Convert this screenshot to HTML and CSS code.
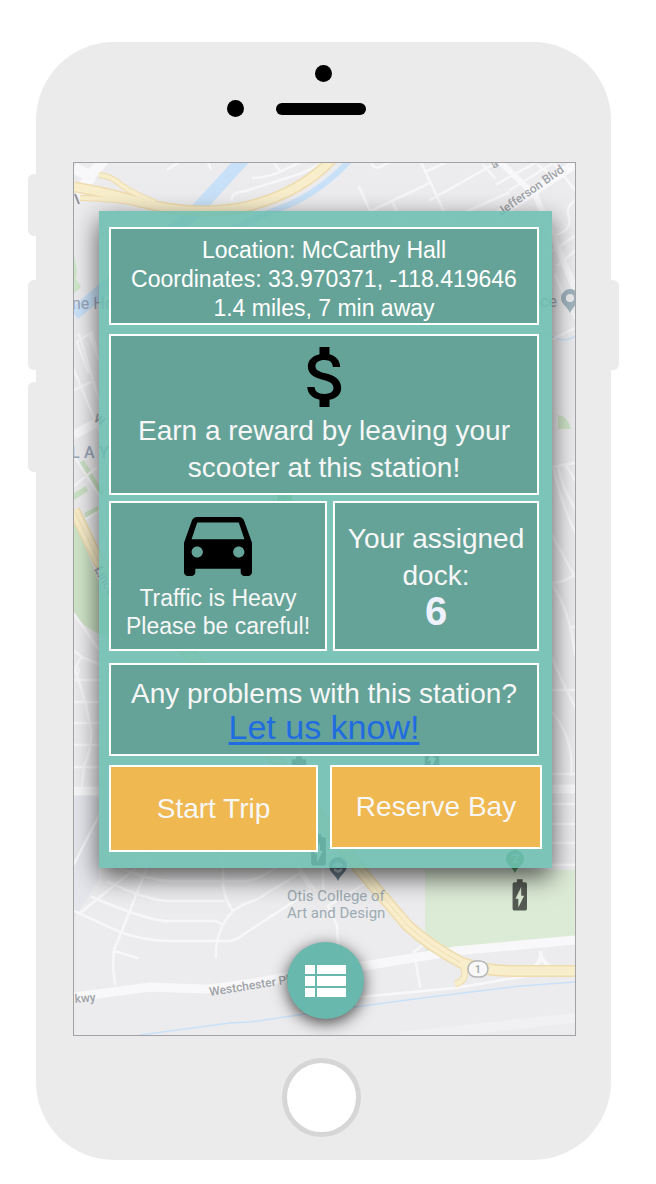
FILE: index.html
```html
<!DOCTYPE html>
<html lang="en">
<head>
<meta charset="utf-8">
<meta name="viewport" content="width=device-width, initial-scale=1">
<title>Scooter station</title>
<link rel="stylesheet" href="styles.css">
</head>
<body>
<div class="device">
  <div class="rail rail-left"><i class="key key-short"></i><i class="key"></i><i class="key key-last"></i></div>
  <div class="phone">
    <header class="phone-top">
      <span class="dot"></span>
      <div class="ear"><span class="dot"></span><span class="speaker"></span></div>
    </header>
    <main class="screen">
      <svg class="map" viewBox="74 163 501 872" preserveAspectRatio="xMidYMid slice" aria-hidden="true">
        <defs>
          <path id="battery" fill-rule="evenodd" d="M15.67 4H14V2h-4v2H8.33C7.6 4 7 4.6 7 5.33v15.33C7 21.4 7.6 22 8.33 22h7.33c.74 0 1.34-.6 1.34-1.33V5.33C17 4.6 16.4 4 15.67 4zM11 20v-5.5H9L13 7v5.5h2L11 20z"/>
        </defs>
        <rect x="74" y="163" width="501" height="872" fill="#ececee"/>
        <!-- parks -->
        <path d="M425 870H575V938L425 952Z" fill="#dcebd6"/>
        <path d="M74 516L98 580L130 640V644L99 634Q82 626 74 614Z" fill="#cfe5c8"/>
        <path d="M74 254L77 270L76 279L81 287L74 293Z" fill="#cfe7c9"/>
        <path d="M558 415Q568 416 571 429H558Z" fill="#cfe5c8"/>
        <path d="M79 463L84 460L104 493L99 497ZM74 493L86 486L88 491L74 500ZM84 513L98 506V513L86 519Z" fill="#cce3c6"/>
        <path d="M74 786L99 800V880L74 918Z" fill="#e4e6ec"/>
        <path d="M277 491h15v13h-15z" fill="#9bd08f"/>
        <text x="281" y="502" class="lbl" font-size="11">y</text>
        <!-- water -->
        <g fill="none" stroke="#c9e1f8">
          <path d="M247 155L196 211L74 314" stroke-width="13"/>
          <path d="M350 160Q315 198 270 212L230 230" stroke-width="6"/>
          <path d="M140 1035L230 1023L250 1022L340 1009L430 997L520 986L575 982" stroke-width="1.5"/>
          <path d="M545 333Q563 345 575 336" stroke-width="1.5"/>
        </g>
        <!-- local streets -->
        <g fill="none" stroke="#f7f7f9" stroke-width="2.5" stroke-linejoin="round" stroke-linecap="round">
          <path d="M168 169L184 159M206 158L211 169M270 158L280 171M253 178Q270 178 290 167L312 157M232 200Q230 193 245 191L300 174L335 157M370 158Q372 170 380 167L400 157M420 160L455 235M430 183L360 216M427 171L470 152M359 187L372 215M393 203L401 220M430 200L505 158M452 218L508 193M483 165L495 178"/>
          <path d="M497 184L540 160M510 190L553 163M538 165L551 175M545 152L575 190M556 235Q574 229 568 214Q567 205 576 200M556 240L576 285M551 252L576 235M558 265L576 250M555 275L575 318M553 339L575 328"/>
          <path d="M74 390L91 382M74 370L99 430M79 334L99 400M90 336L99 360M77 342L92 332M77 342L88 372M92 333L97 350M74 486L96 468M74 456L102 500L106 530M84 520L98 512M74 614L99 650"/>
          <path d="M552 467L575 463M553 467Q560 500 575 532M566 465L576 482M558 468Q563 490 576 510M552 535L575 577M552 583Q567 582 575 574M552 585Q570 610 575 655M571 627H576M552 658Q563 684 575 707M552 690H575M552 712Q575 740 571 775M552 774H575M552 804H575M552 824H575M552 843H575M552 865H575"/>
          <path d="M74 651L82 657L99 664M82 657Q72 668 77 676Q86 700 91 730Q92 750 84 765L82 787M77 676Q80 670 78 668M74 680H99M74 702H99M74 723H99M74 745H99M74 767H99M104 806L74 864"/>
          <path d="M152 855L80 913M150 860L123 928L114 950Q112 965 115 984M114 951L138 958M74 911L120 932Q145 941 170 941H228Q236 941 244 934L310 891M92 897Q140 918 165 921H212Q218 921 221 924M108 882Q145 899 165 901H224M120 868Q150 880 170 881H246Q260 880 290 858M223 855V885Q225 900 233 911Q246 902 256 900L300 873M233 911Q215 930 216 957M290 855L315 890M300 873L310 888M366 883L328 906L337 925L338 945M290 860L340 820M323 855V890M130 820L180 850H260M414 951L420 987M424 944L414 952"/>
        </g>
        <!-- avenues -->
        <g fill="none" stroke="#f8f8fa">
          <path d="M74 997L150 987Q170 988 207 989Q250 985 290 976L370 965L455 951L575 940" stroke-width="9"/>
          <path d="M74 791H99M552 789H575" stroke-width="9"/>
          <path d="M74 435L99 421" stroke-width="9"/>
          <path d="M498 160L536 196L576 292" stroke-width="6"/>
          <path d="M496 216L575 164" stroke-width="9"/>
          <path d="M74 168L90 176L104 160M76 194L92 176" stroke-width="11"/>
          <path d="M360 997L455 988L527 976" stroke-width="2.5"/>
          <path d="M541 951V957Q538 968 528 969M541 957Q547 968 556 968" stroke-width="4"/>
          <path d="M400 1037L575 1018" stroke-width="10" stroke="#f1f1f3"/>
        </g>
        <!-- highways -->
        <g fill="none" stroke="#efdcae">
          <path d="M74 187Q105 192 140 202Q190 216 240 208Q300 195 333 158" stroke-width="11"/>
          <path d="M80 198Q115 198 145 205" stroke-width="6"/>
          <path d="M99 175Q112 176 121 185Q135 195 155 202" stroke-width="6"/>
          <path d="M74 510L99 562L210 675L318 815L360 870L408 926Q430 946 462 963Q485 971 515 971H575" stroke-width="12"/>
          <path d="M462 963Q470 980 455 984" stroke-width="7"/>
        </g>
        <g fill="none" stroke="#f8eecb">
          <path d="M74 187Q105 192 140 202Q190 216 240 208Q300 195 333 158" stroke-width="8"/>
          <path d="M80 198Q115 198 145 205" stroke-width="4"/>
          <path d="M99 175Q112 176 121 185Q135 195 155 202" stroke-width="4"/>
          <path d="M74 510L99 562L210 675L318 815L360 870L408 926Q430 946 462 963Q485 971 515 971H575" stroke-width="9"/>
          <path d="M462 963Q470 980 455 984" stroke-width="5"/>
        </g>
        <path d="M74 510L99 562M360 870L408 926Q430 946 460 962" fill="none" stroke="#f0dfb2"/>
        <!-- route shield -->
        <rect x="468" y="961" width="20" height="16" rx="8" fill="#f8f8f8" stroke="#b4b5b6" stroke-width="1.5"/>
        <text x="478" y="973" class="lbl" font-size="11" text-anchor="middle">1</text>
        <!-- place names -->
        <text class="lbl" font-size="12" transform="translate(501 216) rotate(-35)">Jefferson Blvd</text>
        <text class="lbl" font-size="12" transform="translate(494 169) rotate(-35)">a</text>
        <text class="lbl" font-size="12" transform="translate(210 996) rotate(-9)">Westchester Pkwy</text>
        <text class="lbl" font-size="12" transform="translate(75 1003) rotate(-5)">kwy</text>
        <text class="place" font-size="15" x="287" y="901">Otis College of</text>
        <text class="place" font-size="15" x="287" y="918">Art and Design</text>
        <text class="area" font-size="16" x="72" y="309">ne Ho</text>
        <text class="place" font-size="16" x="540" y="307">ce</text>
        <text class="area" font-size="16" font-weight="500" x="71 84 99" y="458">LAY</text>
        <text class="lbl" font-size="12" transform="translate(93 421) rotate(28)">W</text>
        <text class="lbl" font-size="13" transform="translate(94 569) rotate(62)">Lincoln</text>
        <path d="M75 194L79 204" stroke="#8e9399" stroke-width="2"/>
        <!-- pins -->
        <path fill-rule="evenodd" fill="#a1b4bf" d="M570 289a9 9 0 0 1 9 9c0 6-6 8-9 15c-3-7-9-9-9-15a9 9 0 0 1 9-9zM570 294a4 4 0 1 0 0 8a4 4 0 0 0 0-8z"/>
        <path fill="#6c7f8b" d="M338 857a9 9 0 0 1 9 9c0 6-6 8-9 15c-3-7-9-9-9-15a9 9 0 0 1 9-9z"/>
        <path fill="#b9c4cb" d="M332 865l6-3l6 3l-6 3zM334 868l4 2l4-2v3l-4 2l-4-2z"/>
        <path fill="#60a36e" d="M515 850a9 9 0 0 1 9 9c0 6-6 7-9 14c-3-7-9-8-9-14a9 9 0 0 1 9-9z"/>
        <path fill="none" stroke="#a6cfad" stroke-width="1.5" d="M512 855h7l-5 7h5"/>
        <!-- charging stations -->
        <g fill="#555a53">
          <use href="#battery" transform="translate(502.5 876) scale(1.44 1.57)"/>
          <use href="#battery" transform="translate(301 831) scale(1.46 1.57)"/>
          <use href="#battery" transform="translate(281.5 753) scale(1.46 1.57)"/>
          <use href="#battery" transform="translate(414.5 738) scale(1.46 1.57)"/>
        </g>
      </svg>

      <section class="card">
        <div class="box location">
          <p>Location: McCarthy Hall</p>
          <p>Coordinates: 33.970371, -118.419646</p>
          <p>1.4 miles, 7 min away</p>
        </div>
        <div class="box reward">
          <svg class="dollar" viewBox="6 3 11 18" aria-hidden="true"><path d="M11.8 10.9c-2.27-.59-3-1.2-3-2.15 0-1.09 1.01-1.85 2.7-1.85 1.78 0 2.44.85 2.5 2.1h2.21c-.07-1.72-1.12-3.3-3.21-3.81V3h-3v2.16c-1.94.42-3.5 1.68-3.5 3.61 0 2.31 1.91 3.46 4.7 4.13 2.5.6 3 1.48 3 2.41 0 .69-.49 1.79-2.7 1.79-2.06 0-2.87-.92-2.98-2.1h-2.2c.12 2.19 1.76 3.42 3.68 3.83V21h3v-2.15c1.95-.37 3.5-1.5 3.5-3.55 0-2.84-2.43-3.81-4.7-4.4z"/></svg>
          <p>Earn a reward by leaving your scooter at this station!</p>
        </div>
        <div class="pair">
          <div class="box traffic">
            <svg class="car" viewBox="3 5 18 16" preserveAspectRatio="none" aria-hidden="true"><path fill-rule="evenodd" d="M18.92 6.01C18.72 5.42 18.16 5 17.5 5h-11c-.66 0-1.21.42-1.42 1.01L3 12v8c0 .55.45 1 1 1h1c.55 0 1-.45 1-1v-1h12v1c0 .55.45 1 1 1h1c.55 0 1-.45 1-1v-8l-2.08-5.99zM6.5 16C5.67 16 5 15.33 5 14.5S5.67 13 6.5 13 8 13.67 8 14.5 7.33 16 6.5 16zM17.5 16c-.83 0-1.5-.67-1.5-1.5s.67-1.5 1.5-1.5 1.5.67 1.5 1.5-.67 1.5-1.5 1.5zM5 11l1.5-4.5h11L19 11H5z"/></svg>
            <p>Traffic is Heavy</p>
            <p>Please be careful!</p>
          </div>
          <div class="box dock">
            <p>Your assigned dock:</p>
            <strong>6</strong>
          </div>
        </div>
        <div class="box problems">
          <p>Any problems with this station?</p>
          <a href="#report">Let us know!</a>
        </div>
        <div class="actions">
          <button class="action start" type="button">Start Trip</button>
          <button class="action reserve" type="button">Reserve Bay</button>
        </div>
      </section>

      <button class="fab" type="button" aria-label="List of stations">
        <svg viewBox="0 0 41 32" aria-hidden="true"><path d="M0 0h10v9H0zM12 0h29v9H12zM0 11h10v10H0zM12 11h29v10H12zM0 23h10v9H0zM12 23h29v9H12z"/></svg>
      </button>
    </main>
    <footer class="phone-bottom"><button class="home" type="button" aria-label="Home"></button></footer>
  </div>
  <div class="rail rail-right"><i class="key"></i></div>
</div>
</body>
</html>
```
FILE: styles.css
```css
* { box-sizing: border-box; }

body {
  margin: 0;
  background: #fff;
  font-family: "Liberation Sans", Arial, sans-serif;
}

p { margin: 0; }

button { font-family: inherit; cursor: pointer; }

.device {
  display: grid;
  grid-template-columns: 8px 1fr 8px;
  padding: 42px 37px 23px 28px;
}

.rail { display: flex; flex-direction: column; gap: 12px; }
.rail-left { padding-top: 132px; }
.rail-right { padding-top: 238px; }
.key { height: 90px; background: #ebebeb; }
.rail-left .key { border-radius: 6px 0 0 6px; }
.rail-right .key { border-radius: 0 6px 6px 0; }
.rail .key-short { height: 62px; margin-bottom: 32px; }

.phone {
  background: #ebebeb;
  border-radius: 78px;
  padding: 0 35px 23px 37px;
}

.phone-top {
  display: flex;
  flex-direction: column;
  align-items: center;
  gap: 18px;
  height: 120px;
  padding: 23px 3px 0 0;
}

.dot { width: 17px; height: 17px; border-radius: 50%; background: #000; }
.ear { display: flex; align-items: center; gap: 32px; padding-right: 53px; }
.speaker { width: 90px; height: 12px; border-radius: 6px; background: #000; }

.screen {
  position: relative;
  display: flex;
  flex-direction: column;
  align-items: center;
  gap: 74px;
  padding: 48px 23px 16px 25px;
  border: 1px solid #a2a2a4;
  overflow: hidden;
}

.map { position: absolute; inset: 0; width: 100%; height: 100%; }
.lbl { font-family: Roboto, sans-serif; font-weight: 500; fill: #a0a3a7; }
.place { font-family: Roboto, sans-serif; fill: #9eabb2; }
.area { font-family: Roboto, sans-serif; fill: #9aa6bb; }

.card {
  position: relative;
  width: 100%;
  padding: 16px 10px;
  background: rgba(105, 188, 175, 0.86);
  box-shadow: 0 9px 24px rgba(0, 0, 0, 0.65);
  color: #f7f7f7;
  font-size: 28px;
  line-height: 37px;
  text-align: center;
}

.box { background: #65a398; border: 2px solid #fff; }

.location {
  margin: 0 3px 9px 0;
  padding: 7px 0 0;
  color: #fff;
  font-size: 23px;
  line-height: 29px;
}

.reward { margin: 0 3px 6px 0; padding: 11px 20px 7px; }
.dollar { display: block; width: 37px; height: 60px; margin: 0 auto 5px; }

.pair {
  display: grid;
  grid-template-columns: 218fr 206fr;
  gap: 6px;
  margin: 0 3px 12px 0;
}

.traffic { padding: 14px 0 9px; font-size: 23px; line-height: 28px; }
.car { display: block; width: 68px; height: 59px; margin: 0 auto 8px; }

.dock { padding: 17px 8px 0; }
.dock strong { display: block; color: #eff2fe; font-size: 40px; line-height: 34px; }

.problems { margin: 0 3px 9px 0; padding: 12px 0 11px; line-height: 34px; }
.problems a {
  display: block;
  color: #1f6be0;
  font-size: 34px;
  line-height: 32px;
  text-decoration-thickness: 3px;
  text-underline-offset: 3px;
  text-decoration-skip-ink: none;
}

.actions {
  display: grid;
  grid-template-columns: 209fr 212fr;
  gap: 12px;
  align-items: start;
}

.action {
  padding: 0;
  height: 84px;
  background: #efb850;
  border: 2px solid #fff;
  color: #f7f7f7;
  font-size: 28px;
}

.start { height: 87px; }

.fab {
  position: relative;
  display: grid;
  place-items: center;
  width: 77px;
  height: 77px;
  padding: 0;
  border: 0;
  border-radius: 50%;
  background: #69b8ad;
  box-shadow: 0 4px 16px rgba(0, 0, 0, 0.7);
}

.fab svg { width: 41px; height: 32px; fill: #fff; }

.phone-bottom { display: flex; justify-content: center; padding-top: 22px; }

.home {
  width: 79px;
  height: 79px;
  margin-right: 6px;
  border: 5px solid #d6d6d6;
  border-radius: 50%;
  background: #fff;
}
```
